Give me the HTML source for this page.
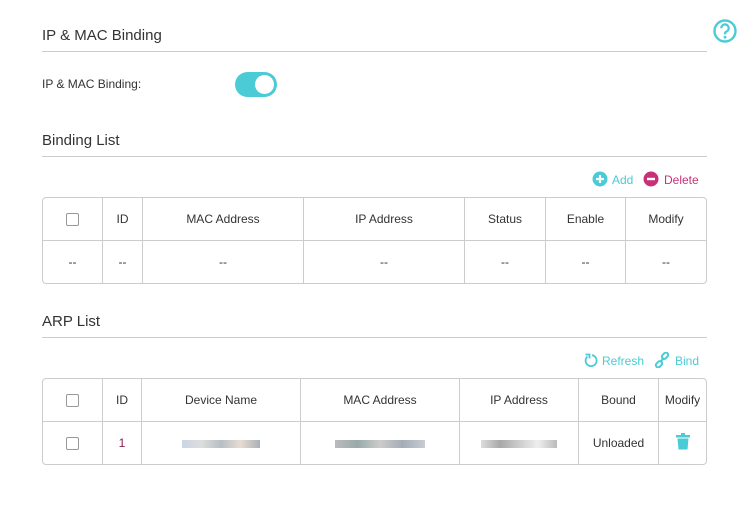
<!DOCTYPE html>
<html><head><style>
body{margin:0;width:746px;height:507px;background:#fff;font-family:"Liberation Sans",sans-serif;color:#333;position:relative;overflow:hidden}
.a{position:absolute}
.t{font-size:15px;color:#333}
.ln{height:1px;background:#ccc;left:42px;width:665px}
table{position:absolute;border-collapse:separate;border-spacing:0;border:1px solid #ccc;border-radius:4px;font-size:12px;table-layout:fixed}
td{border-right:1px solid #ccc;text-align:center;height:42px;padding:0}
td:last-child{border-right:none}
tr:first-child td{border-bottom:1px solid #ccc}
.cb{display:inline-block;width:11px;height:11px;border:1px solid #999;border-radius:2px;vertical-align:middle}
.px{display:inline-block;height:8px;vertical-align:middle}
.lk{font-size:12px;color:#4acbd6}
</style></head><body>
<svg class="a" style="left:712px;top:18px" width="26" height="26" viewBox="0 0 26 26"><circle cx="13" cy="13" r="10.5" fill="none" stroke="#4acbd6" stroke-width="2.4"/><path d="M9.3 10.2a3.7 3.7 0 1 1 5.3 3.3c-1 .5-1.6 1.1-1.6 2.3v.6" fill="none" stroke="#4acbd6" stroke-width="2.3"/><circle cx="13" cy="19.2" r="1.4" fill="#4acbd6"/></svg>
<div class="a t" style="left:42px;top:27px">IP &amp; MAC Binding</div>
<div class="a ln" style="top:51px"></div>
<div class="a" style="left:42px;top:77px;font-size:12px">IP &amp; MAC Binding:</div>
<div class="a" style="left:235px;top:72px;width:42px;height:25px;border-radius:13px;background:#4acbd6"><div class="a" style="right:3px;top:3px;width:19px;height:19px;border-radius:50%;background:#fff"></div></div>
<div class="a t" style="left:42px;top:132px">Binding List</div>
<div class="a ln" style="top:156px"></div>
<svg class="a" style="left:592px;top:171px" width="16" height="16"><circle cx="8" cy="8" r="7.5" fill="#4acbd6"/><path d="M8 4v8M4 8h8" stroke="#fff" stroke-width="2.2"/></svg>
<div class="a lk" style="left:612px;top:173px">Add</div>
<svg class="a" style="left:643px;top:171px" width="16" height="16"><circle cx="8" cy="8" r="7.5" fill="#c8317a"/><path d="M4 8h8" stroke="#fff" stroke-width="2.4"/></svg>
<div class="a" style="left:664px;top:173px;font-size:12px;color:#c8317a">Delete</div>
<table style="left:42px;top:197px;width:665px">
<colgroup><col style="width:60px"><col style="width:40px"><col style="width:161px"><col style="width:161px"><col style="width:81px"><col style="width:80px"><col></colgroup>
<tr><td><span class="cb"></span></td><td>ID</td><td>MAC Address</td><td>IP Address</td><td>Status</td><td>Enable</td><td>Modify</td></tr>
<tr><td>--</td><td>--</td><td>--</td><td>--</td><td>--</td><td>--</td><td>--</td></tr>
</table>
<div class="a t" style="left:42px;top:313px">ARP List</div>
<div class="a ln" style="top:337px"></div>
<svg class="a" style="left:583px;top:352px" width="15" height="16" viewBox="0 0 15 16"><path d="M4.5 4.5A5.5 5.5 0 1 0 9 3.2" fill="none" stroke="#4acbd6" stroke-width="1.8"/><path d="M2.5 2.5h4v4" fill="none" stroke="#4acbd6" stroke-width="1.8"/></svg>
<div class="a lk" style="left:602px;top:354px">Refresh</div>
<svg class="a" style="left:654px;top:352px" width="16" height="16" viewBox="0 0 16 16"><g fill="none" stroke="#4acbd6" stroke-width="2"><rect x="7.5" y="1.5" width="7" height="4.5" rx="2.2" transform="rotate(-45 11 3.7)"/><rect x="1.5" y="10" width="7" height="4.5" rx="2.2" transform="rotate(-45 5 12.2)"/><path d="M6 10l4-4"/></g></svg>
<div class="a lk" style="left:675px;top:354px">Bind</div>
<table style="left:42px;top:378px;width:665px">
<colgroup><col style="width:60px"><col style="width:39px"><col style="width:159px"><col style="width:159px"><col style="width:119px"><col style="width:80px"><col></colgroup>
<tr><td><span class="cb"></span></td><td>ID</td><td>Device Name</td><td>MAC Address</td><td>IP Address</td><td>Bound</td><td>Modify</td></tr>
<tr><td><span class="cb"></span></td><td style="color:#8a1c4f">1</td><td><span class="px" style="width:78px;background:linear-gradient(90deg,#c9d6e4,#ddd,#b8bec6,#e8dcd2,#a8b0b8)"></span></td><td><span class="px" style="width:90px;background:linear-gradient(90deg,#bbb,#9aa,#ccc,#a4acb6,#c8ccd4)"></span></td><td><span class="px" style="width:76px;background:linear-gradient(90deg,#ddd,#a8a8a8,#ccc,#eee,#bbb)"></span></td><td>Unloaded</td><td><svg width="14" height="17" viewBox="0 0 14 17"><rect x="0" y="2" width="14" height="2.5" fill="#4acbd6"/><rect x="5" y="0" width="4" height="2" fill="#4acbd6"/><path d="M1.5 5.5h11l-1 11h-9z" fill="#4acbd6"/></svg></td></tr>
</table>
</body></html>
